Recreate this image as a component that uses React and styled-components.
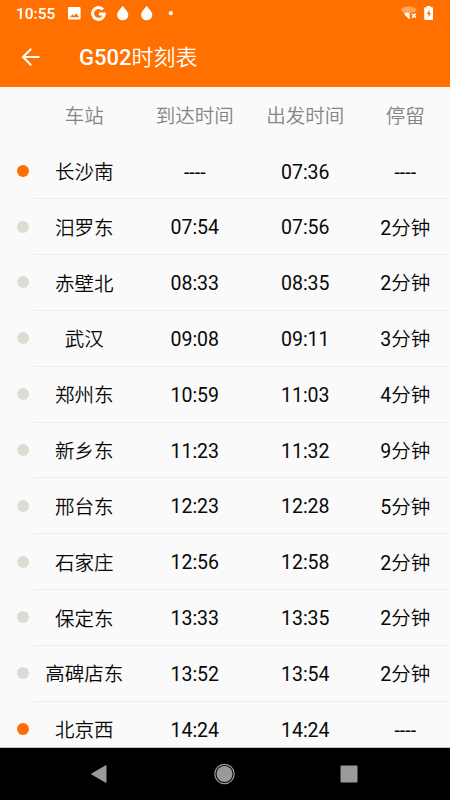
import React from 'react';
import styled, { createGlobalStyle } from 'styled-components';

const stops = [
  { station: '长沙南', arrive: '----', depart: '07:36', active: true },
  { station: '汨罗东', arrive: '07:54', depart: '07:56', stay: 2 },
  { station: '赤壁北', arrive: '08:33', depart: '08:35', stay: 2 },
  { station: '武汉', arrive: '09:08', depart: '09:11', stay: 3 },
  { station: '郑州东', arrive: '10:59', depart: '11:03', stay: 4 },
  { station: '新乡东', arrive: '11:23', depart: '11:32', stay: 9 },
  { station: '邢台东', arrive: '12:23', depart: '12:28', stay: 5 },
  { station: '石家庄', arrive: '12:56', depart: '12:58', stay: 2 },
  { station: '保定东', arrive: '13:33', depart: '13:35', stay: 2 },
  { station: '高碑店东', arrive: '13:52', depart: '13:54', stay: 2 },
  { station: '北京西', arrive: '14:24', depart: '14:24', active: true },
];

const StatusIcons = () => (
  <StatusSvg width="112" height="18" viewBox="0 0 112 18">
    <path
      fill="#fff"
      fillRule="evenodd"
      d="M1.200 1h10.200a1.200 1.200 0 0 1 1.200 1.200v10.200a1.200 1.200 0 0 1-1.200 1.200h-10.200a1.200 1.200 0 0 1-1.200-1.200V2.200A1.200 1.200 0 0 1 1.200 1zM2 11.300h9.200L8.200 7.200 6 10.100 4.400 8.200z"
    />
    <path d="M35 3.600A5.900 5.900 0 1 0 36.400 7.900H31" fill="none" stroke="#fff" strokeWidth="3" />
    <path fill="#fff" d="M54.700 0c2 2.800 5.600 5.500 5.600 8.900a5.600 5.400 0 0 1-11.200 0c0-3.400 3.600-6.100 5.600-8.900z" />
    <path fill="#fff" d="M78.700 0c2 2.800 5.600 5.500 5.600 8.900a5.600 5.400 0 0 1-11.200 0c0-3.400 3.600-6.100 5.600-8.900z" />
    <circle cx="102.900" cy="7.200" r="2.100" fill="#fff" />
  </StatusSvg>
);

const SignalIcons = () => (
  <StatusSvg width="34" height="16" viewBox="0 0 34 16">
    <path fill="#ffa45c" d="M.5 3.300Q8.700-3 17 3.300L14.500 6.500H9.500L8.500 9 4 7.500z" />
    <path fill="#fff" d="M4 7.800Q6.500 6.200 9.700 6.900V13H8.700z" />
    <path d="M12 7.700l3.800 4M15.800 7.700l-3.800 4" stroke="#fff" strokeWidth="1.600" />
    <path
      fill="#fff"
      fillRule="evenodd"
      d="M26.800 0h4v1.300H32a1 1 0 0 1 1 1V13a1 1 0 0 1-1 1h-6.800a1 1 0 0 1-1-1V2.300a1 1 0 0 1 1-1h1.600zM29.400 3.700l-2.700 4.300h1.800v3.500l2.500-4.500h-1.600z"
    />
  </StatusSvg>
);

const BackIcon = () => (
  <BackSvg width="20" height="18" viewBox="0 0 20 18" fill="none" stroke="#fff" strokeWidth="2">
    <path d="M18.500 9H2.200M10.200 .8L2 9l8.200 8.200" />
  </BackSvg>
);

const App = () => {
  return (
    <Screen>
      <GlobalStyle />
      <StatusBar>
        <Clock>10:55</Clock>
        <StatusIcons />
        <Spacer />
        <SignalIcons />
      </StatusBar>
      <TitleBar>
        <BackIcon />
        <Title>
          G502<Han>时刻表</Han>
        </Title>
      </TitleBar>
      <Timetable>
        <HeaderRow>
          <span />
          <Cell><Han>车站</Han></Cell>
          <Cell><Han>到达时间</Han></Cell>
          <Cell><Han>出发时间</Han></Cell>
          <Cell><Han>停留</Han></Cell>
        </HeaderRow>
        {stops.map((stop) => (
          <StopRow key={stop.station}>
            <Dot $active={stop.active} />
            <Cell><Han>{stop.station}</Han></Cell>
            <TimeCell>{stop.arrive}</TimeCell>
            <TimeCell>{stop.depart}</TimeCell>
            {stop.stay ? <StayCell>{stop.stay}<Han>分钟</Han></StayCell> : <TimeCell>----</TimeCell>}
          </StopRow>
        ))}
      </Timetable>
      <NavBar>
        <svg width="18" height="20" viewBox="0 0 18 20">
          <path d="M16 1.600v16.800L1.500 10z" fill="#9a9a9a" stroke="#9a9a9a" strokeLinejoin="round" />
        </svg>
        <svg width="22" height="22" viewBox="0 0 22 22">
          <circle cx="11.500" cy="11" r="9.700" fill="none" stroke="#9a9a9a" strokeWidth="1.200" />
          <circle cx="11.500" cy="11" r="8" fill="#9a9a9a" />
        </svg>
        <svg width="18" height="18" viewBox="0 0 18 18">
          <rect x="0.500" y="0.500" width="17" height="17" rx="1" fill="#9a9a9a" />
        </svg>
      </NavBar>
    </Screen>
  );
};

// Styled components
const GlobalStyle = createGlobalStyle`
  body {
    margin: 0;
    background: #fafafa;
    font-family: Roboto, 'Noto Sans CJK SC', sans-serif;
  }
`;

const Screen = styled.div`
  display: flex;
  flex-direction: column;
  height: 800px;
  overflow: hidden;
`;

const StatusBar = styled.div`
  display: flex;
  align-items: flex-start;
  height: 28px;
  padding: 0 16px;
  box-sizing: border-box;
  background-color: #ff7000;
`;

const Clock = styled.span`
  width: 52px;
  padding-top: 5px;
  color: #fff;
  font-size: 15.5px;
  font-weight: 500;
  line-height: 18px;
`;

const StatusSvg = styled.svg`
  margin-top: 6px;
`;

const Spacer = styled.div`
  flex: 1;
`;

const TitleBar = styled.div`
  display: flex;
  align-items: center;
  height: 59px;
  padding-left: 21px;
  box-sizing: border-box;
  background-color: #ff7000;
`;

const BackSvg = styled.svg`
  margin-bottom: 1px;
`;

const Title = styled.h1`
  margin: 0 0 3px 38px;
  color: #fff;
  font-size: 22px;
  font-weight: 500;
  line-height: 30px;
`;

const Han = styled.span`
  font-family: 'Noto Sans CJK SC', sans-serif;
  font-weight: 350;
`;

const Timetable = styled.div`
  flex: 1;
  min-height: 0;
  overflow: hidden;
  background-color: #fafafa;
`;

const HeaderRow = styled.div`
  display: grid;
  grid-template-columns: 29px 110.5px 110.5px 110.5px 89.5px;
  align-items: center;
  height: 56.4px;
  color: #858585;
`;

const StopRow = styled(HeaderRow)`
  height: 55.830px;
  color: #080808;
  background: linear-gradient(#ececec, #ececec) 33px 100% / 100% 1px no-repeat;
`;

const Cell = styled.span`
  padding-top: 1.4px;
  text-align: center;
  font-size: 19.500px;
  font-weight: 400;
  line-height: 28px;
  white-space: nowrap;
`;

const TimeCell = styled(Cell)`
  padding-top: 2.4px;
`;

const StayCell = styled(Cell)`
  padding-top: 1px;
`;

const Dot = styled.span`
  width: 12px;
  height: 12px;
  margin: 0 0 1px 17px;
  border-radius: 50%;
  background-color: ${(props) => (props.$active ? '#ff7000' : '#dedbd4')};
`;

const NavBar = styled.div`
  display: flex;
  align-items: center;
  justify-content: space-between;
  height: 53px;
  padding: 0 92px 0 90px;
  box-sizing: border-box;
  border-top: 1px solid #bbb;
  background-color: #000;
`;

export default App;
